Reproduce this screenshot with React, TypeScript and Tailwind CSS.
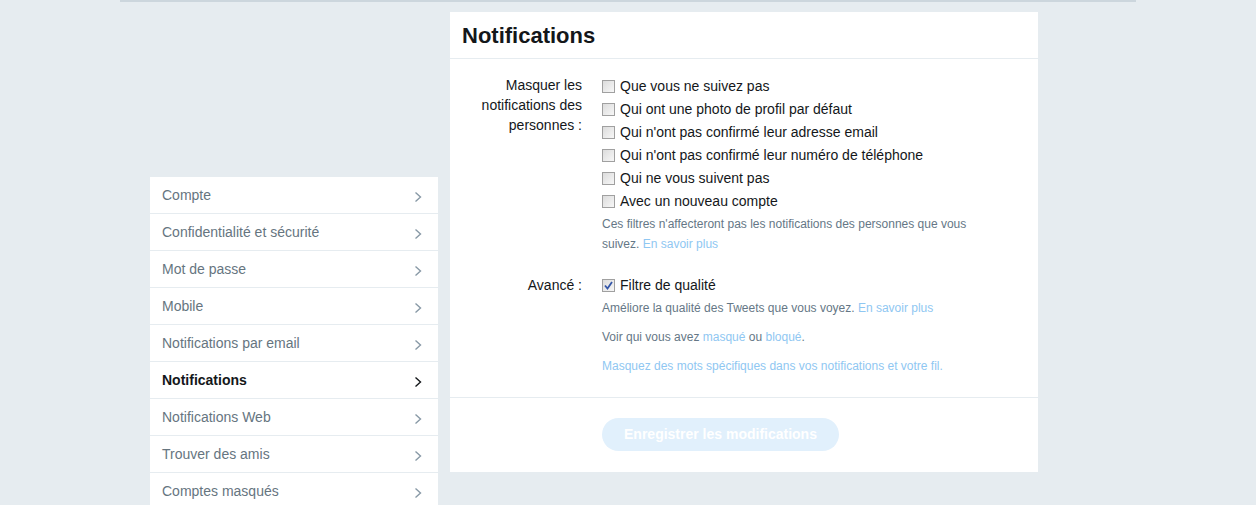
import React from "react";

const font = { fontFamily: '"Liberation Sans", Arial, sans-serif' };

const menu = [
    "Compte",
    "Confidentialité et sécurité",
    "Mot de passe",
    "Mobile",
    "Notifications par email",
    "Notifications",
    "Notifications Web",
    "Trouver des amis",
    "Comptes masqués",
    "Comptes bloqués",
];

const filters = [
    "Que vous ne suivez pas",
    "Qui ont une photo de profil par défaut",
    "Qui n'ont pas confirmé leur adresse email",
    "Qui n'ont pas confirmé leur numéro de téléphone",
    "Qui ne vous suivent pas",
    "Avec un nouveau compte",
];

const Chevron = ({ active }: { active?: boolean }) => (
    <svg width="8" height="12" viewBox="0 0 8 12" className={"mt-[3px] " + (active ? "text-[#14171a]" : "text-[#8899a6]")}>
        <path d="M1.5 1.5 L6.5 6 L1.5 10.5" fill="none" stroke="currentColor" strokeWidth="1.4" />
    </svg>
);

const Box = ({ checked }: { checked?: boolean }) => (
    <span className="flex h-[13px] w-[13px] shrink-0 items-center justify-center border border-[#a0a0a0] bg-gradient-to-br from-[#dcdcdc] to-[#f7f7f7]">
        {checked && (
            <svg width="9" height="9" viewBox="0 0 9 9">
                <path d="M1 4.5 L3.5 7.5 L8 1" fill="none" stroke="#3456a8" strokeWidth="1.8" />
            </svg>
        )}
    </span>
);

const Check = ({ label, checked }: { label: string; checked?: boolean }) => (
    <label className="flex h-[23px] items-center gap-[5px] text-[14px] text-[#14171a]">
        <Box checked={checked} />
        <span>{label}</span>
    </label>
);

const Link = ({ children }: { children: React.ReactNode }) => <span className="text-[#8fc7f2]">{children}</span>;

export default function App() {
    return (
        <div style={font} className="h-[505px] overflow-hidden bg-[#e6ecf0]">
            <div className="mx-auto w-[1016px] border-t-2 border-[#ccd6dd] pl-[30px] pt-[10px]">
                <div className="flex items-start gap-[12px]">
                    {/* sidebar */}
                    <div className="mt-[165px] w-[288px] bg-white">
                        {menu.map((m) => {
                            const active = m === "Notifications";
                            return (
                                <div
                                    key={m}
                                    className={
                                        "flex h-[37px] items-center justify-between border-b border-[#e6ecf0] pl-[12px] pr-[16px] text-[14px] " +
                                        (active ? "font-bold text-[#14171a]" : "text-[#66757f]")
                                    }
                                >
                                    <span>{m}</span>
                                    <Chevron active={active} />
                                </div>
                            );
                        })}
                    </div>

                    {/* main panel */}
                    <div className="w-[588px] bg-white">
                        <div className="flex h-[47px] items-center border-b border-[#e6ecf0] px-[12px]">
                            <h1 className="text-[22px] font-bold text-[#14171a]">Notifications</h1>
                        </div>

                        <div className="pb-[21px] pt-[16px]">
                            <div className="flex">
                                <div className="w-[132px] text-right text-[14px] leading-[20px] text-[#14171a]">
                                    Masquer les
                                    <br />
                                    notifications des
                                    <br />
                                    personnes :
                                </div>
                                <div className="ml-[20px] w-[400px]">
                                    {filters.map((f) => (
                                        <Check key={f} label={f} />
                                    ))}
                                    <p className="mt-[1px] text-[12px] leading-[20px] text-[#657786]">
                                        Ces filtres n'affecteront pas les notifications des personnes que vous suivez.{" "}
                                        <Link>En savoir plus</Link>
                                    </p>
                                </div>
                            </div>

                            <div className="mt-[20px] flex">
                                <div className="w-[132px] text-right text-[14px] leading-[23px] text-[#14171a]">Avancé :</div>
                                <div className="ml-[20px] w-[400px]">
                                    <Check label="Filtre de qualité" checked />
                                    <p className="mt-[1px] text-[12px] leading-[20px] text-[#657786]">
                                        Améliore la qualité des Tweets que vous voyez. <Link>En savoir plus</Link>
                                    </p>
                                    <p className="mt-[9px] text-[12px] leading-[20px] text-[#657786]">
                                        Voir qui vous avez <Link>masqué</Link> ou <Link>bloqué</Link>.
                                    </p>
                                    <p className="mt-[9px] text-[12px] leading-[20px] text-[#8fc7f2]">
                                        Masquez des mots spécifiques dans vos notifications et votre fil.
                                    </p>
                                </div>
                            </div>
                        </div>

                        <div className="border-t border-[#e6ecf0] pb-[21px] pl-[152px] pt-[20px]">
                            <button className="h-[33px] w-[237px] rounded-full bg-[#e1f0fc] text-[14px] font-bold text-white">
                                Enregistrer les modifications
                            </button>
                        </div>
                    </div>
                </div>
            </div>
        </div>
    );
}
